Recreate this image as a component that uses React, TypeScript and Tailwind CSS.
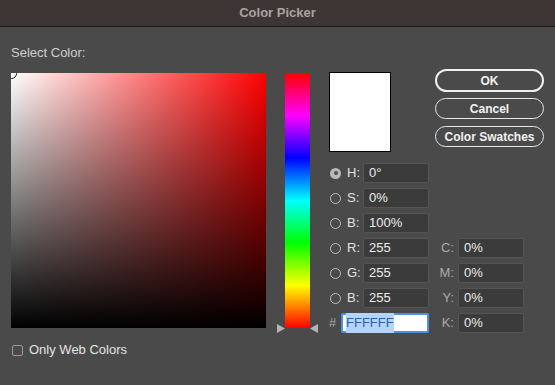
import React from 'react'

type Row = {
  label: string
  value: string
  selected?: boolean
  cmyk?: { label: string; value: string }
}

const rows: Row[] = [
  { label: 'H:', value: '0°', selected: true },
  { label: 'S:', value: '0%' },
  { label: 'B:', value: '100%' },
  { label: 'R:', value: '255', cmyk: { label: 'C:', value: '0%' } },
  { label: 'G:', value: '255', cmyk: { label: 'M:', value: '0%' } },
  { label: 'B:', value: '255', cmyk: { label: 'Y:', value: '0%' } },
]

function Radio({ selected }: { selected?: boolean }) {
  if (selected) {
    return (
      <span className="ml-[1px] flex h-[11px] w-[11px] items-center justify-center rounded-full bg-[#b9b9b9]">
        <span className="h-[4px] w-[4px] rounded-full bg-[#4f4f4f]" />
      </span>
    )
  }
  return <span className="ml-[1px] h-[11px] w-[11px] rounded-full border border-[#bdbdbd]" />
}

function Field({ value }: { value: string }) {
  return (
    <div className="flex h-[20px] w-[66px] items-center rounded-[2px] border border-[#555555] bg-[#3b3b3b] pl-[5px] text-[13px] text-[#ececec]">
      {value}
    </div>
  )
}

function PillButton({ children, primary }: { children: React.ReactNode; primary?: boolean }) {
  return (
    <button
      type="button"
      className={`flex w-[109px] items-center justify-center rounded-full font-bold text-[12px] text-[#f2f2f2] ${
        primary ? 'h-[23px] border-2 border-[#f0f0f0]' : 'h-[21px] border border-[#e6e6e6]'
      }`}
    >
      {children}
    </button>
  )
}

export default function App() {
  return (
    <div
      className="flex h-[385px] w-[555px] flex-col overflow-hidden bg-[#4a4a4a]"
      style={{ fontFamily: '"Liberation Sans", Arial, sans-serif' }}
    >
      <div className="flex h-[27px] shrink-0 items-center justify-center border-b border-[#1c1a1a] bg-[#3e3634] text-[13px] font-bold text-[#a9a3a1]">
        Color Picker
      </div>

      <div className="flex pl-[11px]">
        {/* colour field */}
        <div className="flex w-[255px] flex-col pt-[19px]">
          <div className="h-[14px] text-[13px] leading-[14px] text-[#cfcfcf]">Select Color:</div>
          <div className="relative mt-[13px] h-[255px] w-[255px] overflow-hidden bg-[linear-gradient(to_right,#ffffff,#ff0000)]">
            <div className="absolute inset-0 bg-[linear-gradient(to_top,#000000,rgba(0,0,0,0))]" />
            <div className="absolute -left-[5px] -top-[5px] h-[11px] w-[11px] rounded-full border-[1.5px] border-[#111111]" />
          </div>
          <label className="mt-[15px] flex items-center gap-[6px] pl-[1px] text-[13px] leading-[14px] text-[#e4e4e4]">
            <span className="h-[11px] w-[11px] rounded-[2px] border border-[#9a9a9a]" />
            Only Web Colors
          </label>
        </div>

        {/* hue slider */}
        <div className="relative ml-[11px] w-[41px] pt-[46px]">
          <div className="ml-[8px] h-[255px] w-[25px] bg-[linear-gradient(to_bottom,#ff0000_0%,#ff00ff_16.67%,#0000ff_33.33%,#00ffff_50%,#00ff00_66.67%,#ffff00_83.33%,#ff0000_100%)]" />
          <svg className="absolute left-0 top-[297px]" width="8" height="9" viewBox="0 0 8 9">
            <path d="M0 0 L8 4.5 L0 9 Z" fill="#b4b4b4" />
          </svg>
          <svg className="absolute left-[33px] top-[297px]" width="8" height="9" viewBox="0 0 8 9">
            <path d="M8 0 L0 4.5 L8 9 Z" fill="#b4b4b4" />
          </svg>
        </div>

        {/* preview, buttons, values */}
        <div className="ml-[11px] flex flex-col pt-[42px]">
          <div className="flex items-start">
            <div className="mt-[3px] h-[80px] w-[62px] border border-black bg-white" />
            <div className="ml-[44px] flex flex-col">
              <PillButton primary>OK</PillButton>
              <div className="mt-[6px]">
                <PillButton>Cancel</PillButton>
              </div>
              <div className="mt-[7px]">
                <PillButton>Color Swatches</PillButton>
              </div>
            </div>
          </div>

          <div className="mt-[11px] flex flex-col gap-[5px]">
            {rows.map((row, i) => (
              <div key={i} className="flex h-[20px] items-center">
                <Radio selected={row.selected} />
                <span className="ml-[6px] w-[16px] text-[13px] text-[#e2e2e2]">{row.label}</span>
                <Field value={row.value} />
                {row.cmyk ? (
                  <>
                    <span className="w-[29px] pr-[4px] text-right text-[13px] text-[#a9a9a9]">{row.cmyk.label}</span>
                    <Field value={row.cmyk.value} />
                  </>
                ) : null}
              </div>
            ))}
            <div className="flex h-[20px] items-center">
              <span className="w-[12px] text-[13px] text-[#a9a9a9]">#</span>
              <div className="flex h-[20px] w-[88px] items-center rounded-[2px] border-2 border-[#4d8fe6] bg-white pl-[3px] text-[13px]">
                <span className="bg-[#b3d5fd] text-[#31609c]">FFFFFF</span>
              </div>
              <span className="w-[29px] pr-[4px] text-right text-[13px] text-[#a9a9a9]">K:</span>
              <Field value="0%" />
            </div>
          </div>
        </div>
      </div>
    </div>
  )
}
